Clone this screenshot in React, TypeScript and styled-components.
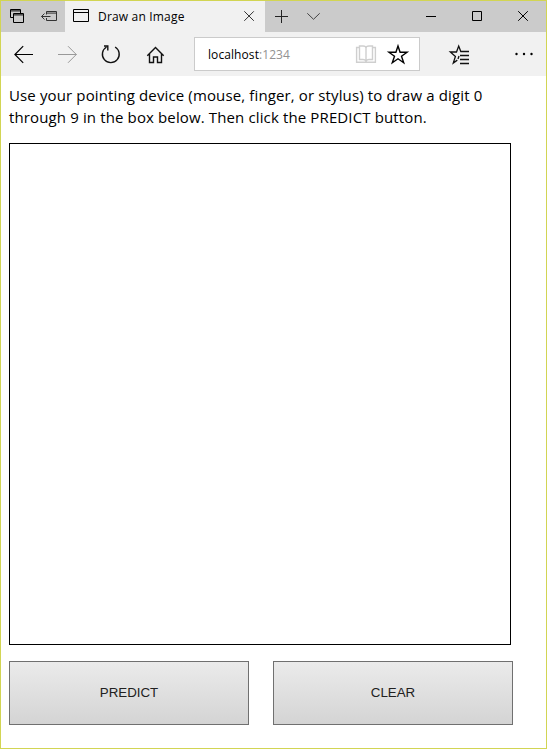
import React from "react";
import styled, { createGlobalStyle } from "styled-components";

const GlobalStyle = createGlobalStyle`
  * { box-sizing: border-box; }
  body { margin: 0; background: #fff; }
`;

const uiFont = `"Open Sans", "Noto Sans", sans-serif`;

const Window = styled.div`
  width: 547px;
  height: 749px;
  border: 1px solid #d2d553;
  background: #fff;
  display: flex;
  flex-direction: column;
  overflow: hidden;
  font-family: ${uiFont};
`;

const TitleBar = styled.header`
  display: flex;
  height: 31px;
  background: #cbcbcb;
`;

const Tab = styled.div`
  display: flex;
  align-items: center;
  width: 200px;
  background: #f1f1f1;
`;

const TabTitle = styled.span`
  flex: 1;
  font-size: 12px;
  line-height: 16px;
  letter-spacing: 0.18px;
  color: #000;
  white-space: nowrap;
`;

const Spacer = styled.div`
  flex: 1;
`;

const Toolbar = styled.nav`
  display: flex;
  align-items: center;
  height: 44px;
  background: #f1f1f1;
`;

const IconButton = styled.button`
  display: flex;
  padding: 0;
  border: 0;
  background: none;
`;

const AddressBar = styled.div`
  display: flex;
  align-items: center;
  width: 226px;
  height: 34px;
  margin: 0 18px 0 16px;
  padding-left: 13px;
  border: 1px solid #cbcbcb;
  background: #fff;
`;

const Address = styled.div`
  flex: 1;
  padding-top: 2px;
  font-size: 12px;
  line-height: 16px;
  letter-spacing: 0.08px;
  color: #000;
`;

const Port = styled.span`
  color: #929292;
`;

const Content = styled.main`
  padding: 8px 8px 0;
`;

const Instructions = styled.p`
  margin: 0;
  font-size: 15px;
  line-height: 22px;
  letter-spacing: 0.13px;
  color: #000;
  white-space: nowrap;
`;

const Line = styled.span`
  display: block;
`;

const DrawingCanvas = styled.canvas`
  display: block;
  width: 502px;
  height: 502px;
  margin-top: 15px;
  border: 1px solid #000;
`;

const Actions = styled.div`
  display: flex;
  gap: 24px;
  margin-top: 16px;
`;

const ActionButton = styled.button`
  width: 240px;
  height: 64px;
  padding: 0 0 1px;
  border: 1px solid #707070;
  border-radius: 0;
  background: linear-gradient(#ebebeb, #d4d4d4);
  font: 13.333px "Liberation Sans", Arial, sans-serif;
  color: #212121;
`;

interface GlyphProps {
  box: string;
  color?: string;
  label: string;
  weight?: number;
  children: React.ReactNode;
}

function Glyph({ box, color = "#000", label, weight = 1, children }: GlyphProps) {
  const [, , width, height] = box.split(" ");
  return (
    <IconButton aria-label={label}>
      <svg width={width} height={height} viewBox={box} fill="none" stroke={color} strokeWidth={weight}>
        {children}
      </svg>
    </IconButton>
  );
}

export default function App() {
  return (
    <>
      <GlobalStyle />
      <Window>
        <TitleBar>
          <Glyph box="1 1 32 31" label="Tabs you've set aside">
            <path d="M10.500 9.500h10v8h-10zM10.500 10.900h10" />
            <path d="M13.500 13.500h10v9h-10zM13.500 14.900h10" fill="#cbcbcb" />
          </Glyph>
          <Glyph box="33 1 32 31" label="Set these tabs aside" color="#333">
            <path d="M46.500 14.500v-3h10v9h-10V18M46.500 13.100h10M41.500 16.500h9M44.500 13.500l-3 3 3 3" />
          </Glyph>
          <Tab>
            <Glyph box="65 1 33 31" label="Page">
              <path d="M73.500 9.500h15v12h-15zM73.500 12.500h15" />
            </Glyph>
            <TabTitle>Draw an Image</TabTitle>
            <Glyph box="233 1 32 31" label="Close tab" color="#333">
              <path d="M244.300 11.300l9.500 9.500M253.800 11.300l-9.500 9.500" />
            </Glyph>
          </Tab>
          <Glyph box="265 1 33 31" label="New tab" color="#222">
            <path d="M275 16.500h13M281.500 10v13" />
          </Glyph>
          <Glyph box="298 1 32 31" label="Show tab previews" color="#444">
            <path d="M307.300 13.300l6.200 6 6.200-6" />
          </Glyph>
          <Spacer />
          <Glyph box="408 1 46 31" label="Minimize">
            <path d="M426 16.500h10" />
          </Glyph>
          <Glyph box="454 1 46 31" label="Maximize">
            <path d="M472.500 11.500h9v9h-9z" />
          </Glyph>
          <Glyph box="500 1 46 31" label="Close">
            <path d="M518.200 11.200l9.600 9.600M527.800 11.200l-9.600 9.600" />
          </Glyph>
        </TitleBar>

        <Toolbar>
          <Glyph box="1 32 45 44" label="Back" weight={1.2}>
            <path d="M14.800 54.500H33M23.200 46.200l-8.300 8.300 8.300 8.300" />
          </Glyph>
          <Glyph box="46 32 43 44" label="Forward" color="#999">
            <path d="M58 54.500h18.500M68 46.200l8.300 8.300-8.300 8.300" />
          </Glyph>
          <Glyph box="89 32 44 44" label="Refresh" color="#111" weight={1.4}>
            <path d="M106.500 47a8.400 8.400 0 1 0 8.600 0M104 46h3.800v4.400" />
          </Glyph>
          <Glyph box="133 32 45 44" label="Home" color="#111" weight={1.4}>
            <path d="M147.300 55.700l8.200-8.200 8.200 8.200M149.500 54v8.500h4V57h4v5.500h4V54" />
          </Glyph>
          <AddressBar>
            <Address>
              localhost<Port>:1234</Port>
            </Address>
            <Glyph box="352 38 30 32" label="Reading view" color="#cfcfcf" weight={1.4}>
              <path d="M359 47.500h-2.400v14.700h18.800V47.500H373M359.500 46h3.500q3 0 3 2v13q-1-1.500-3-1.500h-3.500zM366 48q0-2 3-2h3.500v13.500H369q-2 0-3 1.500M366 60v3" />
            </Glyph>
            <Glyph box="382 38 37 32" label="Add to favorites" weight={1.4}>
              <path d="M398 46l2.100 6.200h7l-5.600 4.100 2.200 6.500-5.700-4-5.700 4 2.200-6.500-5.600-4.100h7z" />
            </Glyph>
          </AddressBar>
          <Glyph box="438 32 44 44" label="Hub" color="#111" weight={1.3}>
            <path d="M469 51.500h-8.200L458.700 46l-2.200 6h-6.200l5.100 4.500-2.100 6.500 4-2.900M460 55.500h9M460 59.500h9M460 63.500h9M459 56l-1 3" />
          </Glyph>
          <Spacer />
          <Glyph box="502 32 44 44" label="More">
            <g fill="#000" stroke="none">
              <circle cx="516.500" cy="54" r="1.200" />
              <circle cx="524" cy="54" r="1.200" />
              <circle cx="531.500" cy="54" r="1.200" />
            </g>
          </Glyph>
        </Toolbar>

        <Content>
          <Instructions>
            <Line>Use your pointing device (mouse, finger, or stylus) to draw a digit 0</Line>
            <Line>through 9 in the box below. Then click the PREDICT button.</Line>
          </Instructions>
          <DrawingCanvas width={500} height={500} />
          <Actions>
            <ActionButton>PREDICT</ActionButton>
            <ActionButton>CLEAR</ActionButton>
          </Actions>
        </Content>
      </Window>
    </>
  );
}
